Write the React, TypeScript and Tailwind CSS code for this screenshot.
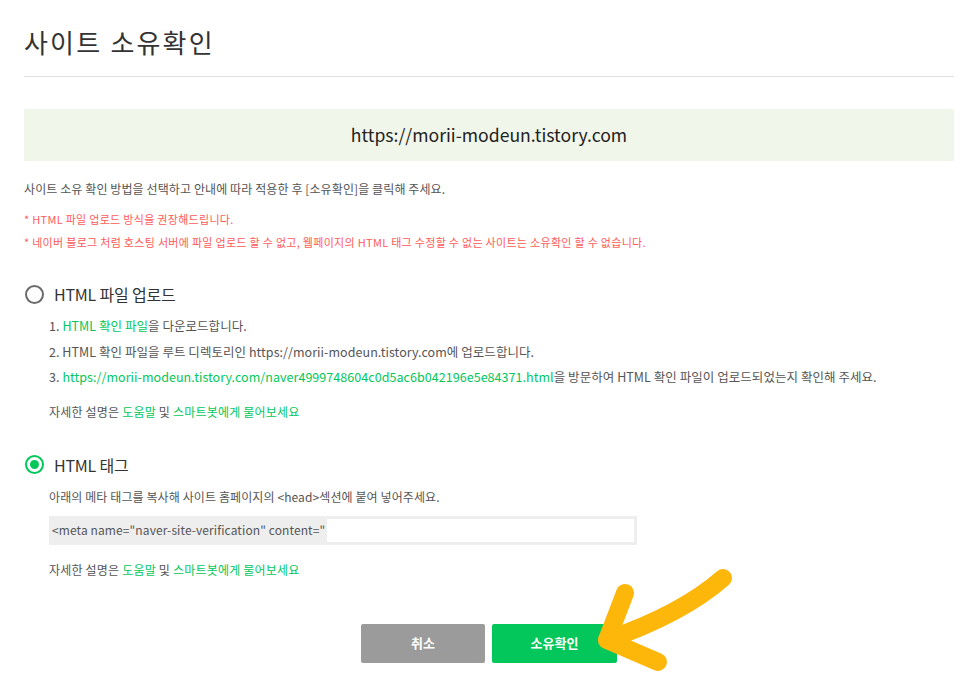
import React from 'react';

const font = { fontFamily: '"Noto Sans CJK KR", "Noto Sans", sans-serif' };

const Radio = ({ checked }: { checked?: boolean }) =>
  checked ? (
    <span className="flex h-[19px] w-[19px] items-center justify-center rounded-full border-2 border-[#03c75a] bg-white">
      <span className="h-[9px] w-[9px] rounded-full bg-[#03c75a]" />
    </span>
  ) : (
    <span className="h-[19px] w-[19px] rounded-full border-2 border-[#6b6b6b] bg-white" />
  );

const Help = () => (
  <p className="text-[12px] leading-[18px] tracking-[0.2px] text-[#555]">
    자세한 설명은 <span className="text-[#03c75a]">도움말</span> 및{' '}
    <span className="text-[#03c75a]">스마트봇에게 물어보세요</span>
  </p>
);

export default function App() {
  return (
    <div className="relative h-[690px] w-[965px] overflow-hidden bg-white" style={font}>
      <div className="pl-[24px] pr-[11px] pt-[24px]">
        {/* 제목 */}
        <h1 className="text-[26px] leading-[36px] tracking-[2.2px] text-[#333]">사이트 소유확인</h1>
        <div className="mt-[16px] border-t border-[#e1e1e1]" />

        {/* 사이트 주소 */}
        <div className="mt-[32px] flex h-[52px] items-center justify-center bg-[#f1f6ea] text-[17.6px] text-[#222]">
          https://morii-modeun.tistory.com
        </div>

        <p className="mt-[19px] text-[12px] leading-[18px] tracking-[0.1px] text-[#555]">
          사이트 소유 확인 방법을 선택하고 안내에 따라 적용한 후 [소유확인]을 클릭해 주세요.
        </p>
        <div className="mt-[10px] text-[11px] leading-[23px] tracking-[0.3px] text-[#ff5a5a]">
          <p>* HTML 파일 업로드 방식을 권장해드립니다.</p>
          <p>* 네이버 블로그 처럼 호스팅 서버에 파일 업로드 할 수 없고, 웹페이지의 HTML 태그 수정할 수 없는 사이트는 소유확인 할 수 없습니다.</p>
        </div>

        {/* HTML 파일 업로드 */}
        <div className="mt-[28px] flex h-[24px] items-center gap-[10px] pl-[1px]">
          <Radio />
          <span className="text-[16px] tracking-[-0.2px] text-[#333]">HTML 파일 업로드</span>
        </div>
        <div className="pl-[25px]">
          <ol className="mt-[7px] text-[12.5px] leading-[25.5px] tracking-[0.05px] text-[#555]">
            <li>
              1. <span className="text-[#03c75a]">HTML 확인 파일</span>을 다운로드합니다.
            </li>
            <li>2. HTML 확인 파일을 루트 디렉토리인 https://morii-modeun.tistory.com에 업로드합니다.</li>
            <li>
              3.{' '}
              <span className="text-[#03c75a]">
                https://morii-modeun.tistory.com/naver4999748604c0d5ac6b042196e5e84371.html
              </span>
              을 방문하여 HTML 확인 파일이 업로드되었는지 확인해 주세요.
            </li>
          </ol>
          <div className="mt-[13px]">
            <Help />
          </div>
        </div>

        {/* HTML 태그 */}
        <div className="mt-[32px] flex h-[24px] items-center gap-[10px] pl-[1px]">
          <Radio checked />
          <span className="text-[16px] tracking-[-0.2px] text-[#333]">HTML 태그</span>
        </div>
        <div className="pl-[25px]">
          <p className="mt-[11px] text-[12px] leading-[18px] tracking-[0.1px] text-[#555]">
            아래의 메타 태그를 복사해 사이트 홈페이지의 &lt;head&gt;섹션에 붙여 넣어주세요.
          </p>
          <div className="mt-[10px] flex h-[29px] w-[588px] items-center bg-[#eeeeee] py-[3px] pl-[3px] pr-[3px]">
            <span className="text-[12px] tracking-[0.1px] text-[#555]">
              &lt;meta name="naver-site-verification" content="
            </span>
            <span className="ml-[2px] h-[23px] flex-1 bg-white" />
          </div>
          <div className="mt-[16px]">
            <Help />
          </div>
        </div>

        {/* 버튼 */}
        <div className="mt-[45px] flex justify-center gap-[7px]">
          <button className="h-[39px] w-[124px] rounded-[2px] bg-[#9b9b9b] text-[13px] font-bold text-white">
            취소
          </button>
          <button className="h-[39px] w-[125px] rounded-[2px] bg-[#03c75a] text-[13px] font-bold text-white">
            소유확인
          </button>
        </div>
      </div>

      {/* 화살표 */}
      <svg className="absolute left-0 top-0" width="965" height="690" fill="none">
        <path
          d="M723 578 Q682 614 607 640"
          stroke="#fdb70b"
          strokeWidth="18"
          strokeLinecap="round"
          strokeLinejoin="round"
        />
        <path
          d="M625 593 L607 640 L658 662"
          stroke="#fdb70b"
          strokeWidth="18"
          strokeLinecap="round"
          strokeLinejoin="round"
        />
      </svg>
    </div>
  );
}
